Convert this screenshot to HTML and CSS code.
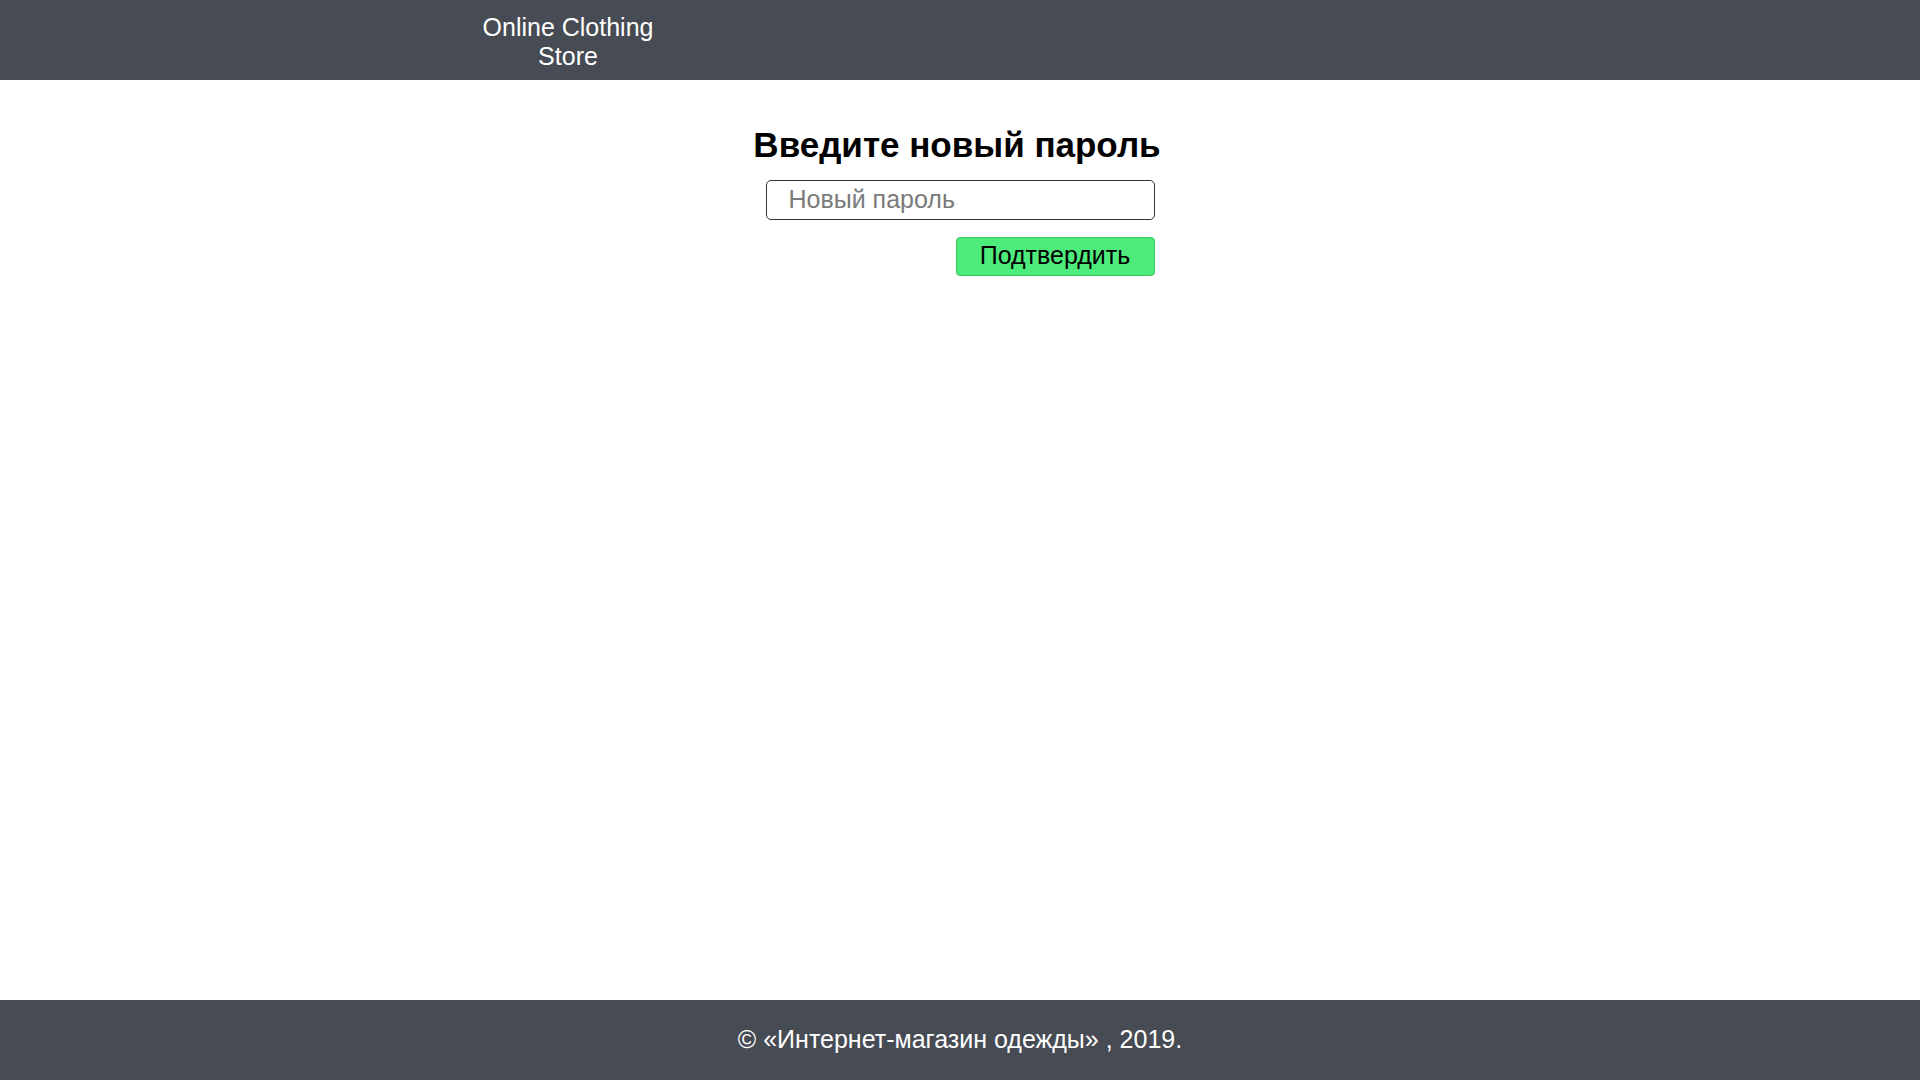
FILE: index.html
```html
<!DOCTYPE html>
<html lang="ru">
<head>
<meta charset="utf-8">
<title>Online Clothing Store</title>
<link rel="stylesheet" href="styles.css">
</head>
<body>
<div class="page">
  <header class="site-header">
    <div class="logo">Online Clothing Store</div>
  </header>
  <main class="content">
    <h1 class="title">Введите новый пароль</h1>
    <form class="reset-form">
      <input class="field" type="password" placeholder="Новый пароль">
      <div class="actions">
        <button class="submit" type="button">Подтвердить</button>
      </div>
    </form>
  </main>
  <footer class="site-footer">© «Интернет-магазин одежды» , 2019.</footer>
</div>
</body>
</html>
```

FILE: styles.css
```css
html, body {
  margin: 0;
  padding: 0;
  background: #ffffff;
  font-family: "Liberation Sans", Arial, sans-serif;
}

.page {
  display: flex;
  flex-direction: column;
  min-height: 1080px;
}

.site-header {
  height: 80px;
  background: #474b54;
  display: flex;
  box-sizing: border-box;
  padding-left: 478px;
}

.logo {
  width: 180px;
  padding-top: 13px;
  color: #ffffff;
  font-size: 25px;
  line-height: 29px;
  text-align: center;
}

.content {
  flex: 1;
  display: flex;
  flex-direction: column;
  align-items: center;
}

.title {
  margin: 46px 0 0 0;
  padding-right: 6px;
  font-size: 35px;
  font-weight: bold;
  color: #000000;
  line-height: 38px;
}

.reset-form {
  width: 389px;
  margin-top: 16px;
  display: flex;
  flex-direction: column;
  gap: 17px;
}

.field {
  box-sizing: border-box;
  width: 100%;
  height: 40px;
  border: 1px solid #333333;
  border-radius: 5px;
  padding: 0 22px 2px 22px;
  font-family: "Liberation Sans", Arial, sans-serif;
  font-size: 25px;
  color: #000000;
  outline: none;
}

.field::placeholder {
  color: #7a7a7a;
}

.actions {
  display: flex;
  justify-content: flex-end;
}

.submit {
  box-sizing: border-box;
  width: 199px;
  height: 39px;
  background: #4deb7c;
  border: 1px solid #3cc463;
  border-radius: 4px;
  font-family: "Liberation Sans", Arial, sans-serif;
  font-size: 25px;
  color: #000000;
  padding: 0 0 3px 0;
}

.site-footer {
  height: 80px;
  box-sizing: border-box;
  padding-bottom: 2px;
  background: #474b54;
  color: #ffffff;
  font-size: 25px;
  display: flex;
  align-items: center;
  justify-content: center;
}
```
